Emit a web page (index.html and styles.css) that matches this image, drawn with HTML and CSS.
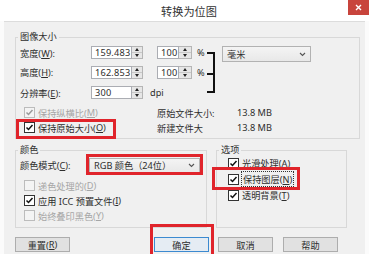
FILE: index.html
```html
<!DOCTYPE html>
<html>
<head>
<meta charset="utf-8">
<link rel="stylesheet" href="styles.css">
</head>
<body>
<div class="window">
  <div class="titlebar">
    <div class="title">转换为位图</div>
    <div class="close"><svg width="7" height="7" viewBox="0 0 7 7"><path d="M1 1L6 6M6 1L1 6" stroke="#fff" stroke-width="1.4"/></svg></div>
  </div>
  <div class="panel">
    <fieldset class="group g-size">
      <legend>图像大小</legend>
      <div class="size-grid">
        <span class="lbl r1">宽度(<u>W</u>):</span>
        <span class="num wide r1"><span class="val">159.483</span><span class="spin"><i class="up"></i><i class="dn"></i></span></span>
        <span class="num pct r1"><span class="val">100</span><span class="spin"><i class="up"></i><i class="dn"></i></span></span>
        <span class="pctsign r1">%</span>
        <span class="bracket"></span>
        <span class="select unitsel r1"><span>毫米</span><svg class="chev" width="7" height="5" viewBox="0 0 7 5"><path d="M1 1L3.5 3.5L6 1" fill="none" stroke="#555" stroke-width="1.1"/></svg></span>

        <span class="lbl r2">高度(<u>H</u>):</span>
        <span class="num wide r2"><span class="val">162.853</span><span class="spin"><i class="up"></i><i class="dn"></i></span></span>
        <span class="num pct r2"><span class="val">100</span><span class="spin"><i class="up"></i><i class="dn"></i></span></span>
        <span class="pctsign r2">%</span>

        <span class="lbl r3">分辨率(<u>E</u>):</span>
        <span class="num wide r3"><span class="val">300</span><span class="spin"><i class="up"></i><i class="dn"></i></span></span>
        <span class="dpi r3">dpi</span>
      </div>
      <div class="info-grid">
        <span class="check disabled"><span class="cb"><svg width="9" height="9" viewBox="0 0 9 9"><path d="M1.5 4.5L3.5 6.5L7.5 2" fill="none" stroke="#9a9a9a" stroke-width="1.5"/></svg></span>保持纵横比(<u>M</u>)</span>
        <span class="info-lbl">原始文件大小:</span>
        <span class="info-val">13.8 MB</span>
        <span class="check hl hl-keep"><span class="cb"><svg width="9" height="9" viewBox="0 0 9 9"><path d="M1.5 4.5L3.5 6.5L7.5 2" fill="none" stroke="#111" stroke-width="1.5"/></svg></span>保持原始大小(<u>O</u>)</span>
        <span class="info-lbl">新建文件大</span>
        <span class="info-val">13.8 MB</span>
      </div>
    </fieldset>

    <div class="lower">
      <fieldset class="group g-color">
        <legend>颜色</legend>
        <div class="mode-row">
          <span class="lbl">颜色模式(<u>C</u>):</span>
          <span class="select modesel hl hl-mode"><span>RGB 颜色（24位）</span><svg class="chev" width="7" height="5" viewBox="0 0 7 5"><path d="M1 1L3.5 3.5L6 1" fill="none" stroke="#555" stroke-width="1.1"/></svg></span>
        </div>
        <div class="checks">
          <span class="check disabled"><span class="cb"></span>递色处理的(<u>D</u>)</span>
          <span class="check"><span class="cb"><svg width="9" height="9" viewBox="0 0 9 9"><path d="M1.5 4.5L3.5 6.5L7.5 2" fill="none" stroke="#111" stroke-width="1.5"/></svg></span>应用 ICC 预置文件(<u>I</u>)</span>
          <span class="check disabled"><span class="cb"></span>始终叠印黑色(<u>Y</u>)</span>
        </div>
      </fieldset>
      <fieldset class="group g-opts">
        <legend>选项</legend>
        <div class="opt-checks">
          <span class="check"><span class="cb"><svg width="9" height="9" viewBox="0 0 9 9"><path d="M1.5 4.5L3.5 6.5L7.5 2" fill="none" stroke="#111" stroke-width="1.5"/></svg></span>光滑处理(<u>A</u>)</span>
          <span class="check hl-row"><span class="cb"><svg width="9" height="9" viewBox="0 0 9 9"><path d="M1.5 4.5L3.5 6.5L7.5 2" fill="none" stroke="#111" stroke-width="1.5"/></svg></span><span class="focus">保持图层(<u>N</u>)</span><span class="mark mark-layer"></span></span>
          <span class="check"><span class="cb"><svg width="9" height="9" viewBox="0 0 9 9"><path d="M1.5 4.5L3.5 6.5L7.5 2" fill="none" stroke="#111" stroke-width="1.5"/></svg></span>透明背景(<u>T</u>)</span>
        </div>
      </fieldset>
    </div>

    <div class="buttons">
      <span class="btn">重置(<u>R</u>)</span>
      <span class="btn default hl hl-ok">确定</span>
      <span class="btn">取消</span>
      <span class="btn">帮助</span>
    </div>
  </div>
</div>
</body>
</html>
```

FILE: styles.css
```css
* { box-sizing: border-box; }
html, body { margin: 0; padding: 0; }
body {
  width: 369px;
  height: 254px;
  overflow: hidden;
  background: #fbfbfb;
  font-family: "Noto Sans", "Noto Sans CJK SC", sans-serif;
  font-size: 9.2px;
  color: #2e2e2e;
}
u { text-decoration: underline; text-underline-offset: 1px; }

.window {
  width: 369px;
  height: 254px;
  display: flex;
  flex-direction: column;
  background: #fbfbfb;
}
.titlebar {
  height: 21px;
  display: flex;
  align-items: flex-start;
  background: #ffffff;
}
.title {
  flex: 1;
  text-align: center;
  padding-left: 30px;
  line-height: 23px;
  font-size: 11.2px;
  color: #333;
}
.close {
  width: 21px;
  height: 15px;
  background: #c8443c;
  display: flex;
  align-items: center;
  justify-content: center;
}

.panel {
  flex: 1;
  margin: 0 4px;
  background: #f0f0f0;
  border-top: 1px solid #dcdcdc;
  padding: 9px 5px 0 11px;
  display: flex;
  flex-direction: column;
}

.group {
  margin: 0;
  padding: 0 4px;
  border: 1px solid #d8d8d8;
  min-width: 0;
}
.group legend {
  padding: 0 2px;
  margin-left: -2px;
  line-height: 12px;
  height: 12px;
}

/* size grid */
.size-grid {
  display: grid;
  grid-template-columns: 71px 52px 14px 35px 15px 9px 6px 89px;
  grid-template-rows: 19px 20px 21px;
  align-items: center;
}
.r1 { grid-row: 1; }
.r2 { grid-row: 2; }
.r3 { grid-row: 3; }
.lbl { grid-column: 1; white-space: nowrap; }
.num {
  display: flex;
  height: 13px;
}
.num .val {
  flex: 1;
  background: #fff;
  border: 1px solid #abadb3;
  line-height: 11px;
  padding-left: 3px;
  letter-spacing: 0.2px;
}
.num.wide { grid-column: 2; width: 52px; }
.num.pct { grid-column: 4; width: 35px; }
.num.wide .spin { width: 11px; }
.num.pct .spin { width: 13px; }
.spin {
  display: flex;
  flex-direction: column;
  border: 1px solid #b5b5b5;
  border-left: none;
  background: #e6e6e6;
}
.spin i {
  flex: 1;
  display: flex;
  align-items: center;
  justify-content: center;
}
.spin .up { border-bottom: 1px solid #c8c8c8; }
.spin .up::before {
  content: "";
  border-left: 2px solid transparent;
  border-right: 2px solid transparent;
  border-bottom: 3px solid #222;
}
.spin .dn::before {
  content: "";
  border-left: 2px solid transparent;
  border-right: 2px solid transparent;
  border-top: 3px solid #222;
}
.pctsign { grid-column: 5; padding-left: 5px; }
.dpi { grid-column: 3 / 6; padding-left: 7px; }
.bracket {
  grid-column: 6;
  grid-row: 1 / 4;
  align-self: stretch;
  margin: 9px 1px 10px 0;
  border: 2px solid #111;
  border-left: none;
  position: relative;
}
.bracket::after {
  content: "";
  position: absolute;
  left: 0;
  right: 0;
  top: 19px;
  border-top: 2px solid #111;
}
.select {
  display: flex;
  align-items: center;
  justify-content: space-between;
  height: 16px;
  padding: 0 4px 0 4px;
  border: 1px solid #b2b2b2;
  background: linear-gradient(#f4f4f4, #e8e8e8);
}
.unitsel { grid-column: 8; align-self: start; margin-top: 3px; }

.info-grid {
  display: grid;
  grid-template-columns: 137px 80px auto;
  grid-auto-rows: 15px;
  align-items: center;
  margin-top: 2px;
  padding-bottom: 3px;
}
.info-lbl, .info-val { white-space: nowrap; }

.check {
  display: flex;
  align-items: center;
  white-space: nowrap;
  padding-left: 4px;
}
.cb {
  width: 11px;
  height: 11px;
  border: 1px solid #333;
  background: #fff;
  margin-right: 3px;
  display: flex;
  align-items: center;
  justify-content: center;
  flex: none;
}
.check.disabled { color: #a6a6a6; }
.check.disabled .cb { border-color: #bcbcbc; background: #f4f4f4; }

.hl { position: relative; }
.hl::after {
  content: "";
  position: absolute;
  border: 3px solid #e0242b;
  pointer-events: none;
}
.hl-keep { justify-self: start; padding-right: 4px; }
.hl-keep::after { left: -4px; right: -6px; top: -2px; bottom: -4px; }

/* lower groups */
.lower {
  display: flex;
  margin-top: 5px;
  padding-right: 13px;
}
.g-color { width: 192px; padding-bottom: 4px; }
.g-opts { flex: 1; margin-left: 9px; }
.mode-row {
  display: flex;
  align-items: center;
  height: 18px;
}
.mode-row .lbl { width: 69px; }
.modesel { width: 111px; height: 15px; }
.hl-mode::after { left: -4px; right: -4px; top: -5px; bottom: -3px; }
.checks {
  display: grid;
  grid-auto-rows: 15px;
  margin-top: 4px;
}
.opt-checks {
  display: grid;
  grid-auto-rows: 16px;
  margin-top: -1px;
  padding-left: 3px;
}
.hl-row { position: relative; }
.mark {
  position: absolute;
  border: 3px solid #e0242b;
  pointer-events: none;
}
.mark-layer { left: -12px; width: 88px; top: -4px; bottom: -3px; }
.focus { outline: 1px dotted #333; outline-offset: 0; padding: 0 1px; }

.buttons {
  display: flex;
  margin-top: 9px;
}
.btn {
  width: 55px;
  height: 15px;
  display: flex;
  align-items: center;
  justify-content: center;
  background: #e1e1e1;
  border: 1px solid #adadad;
}
.btn + .btn { margin-left: 9px; }
.btn.default {
  margin-left: 84px;
  border-color: #3c8ad0;
  background: #e5ecf3;
}
.btn:last-child { margin-left: 10px; }
.hl-ok::after { left: -5px; right: -6px; top: -14px; bottom: -10px; }
```
